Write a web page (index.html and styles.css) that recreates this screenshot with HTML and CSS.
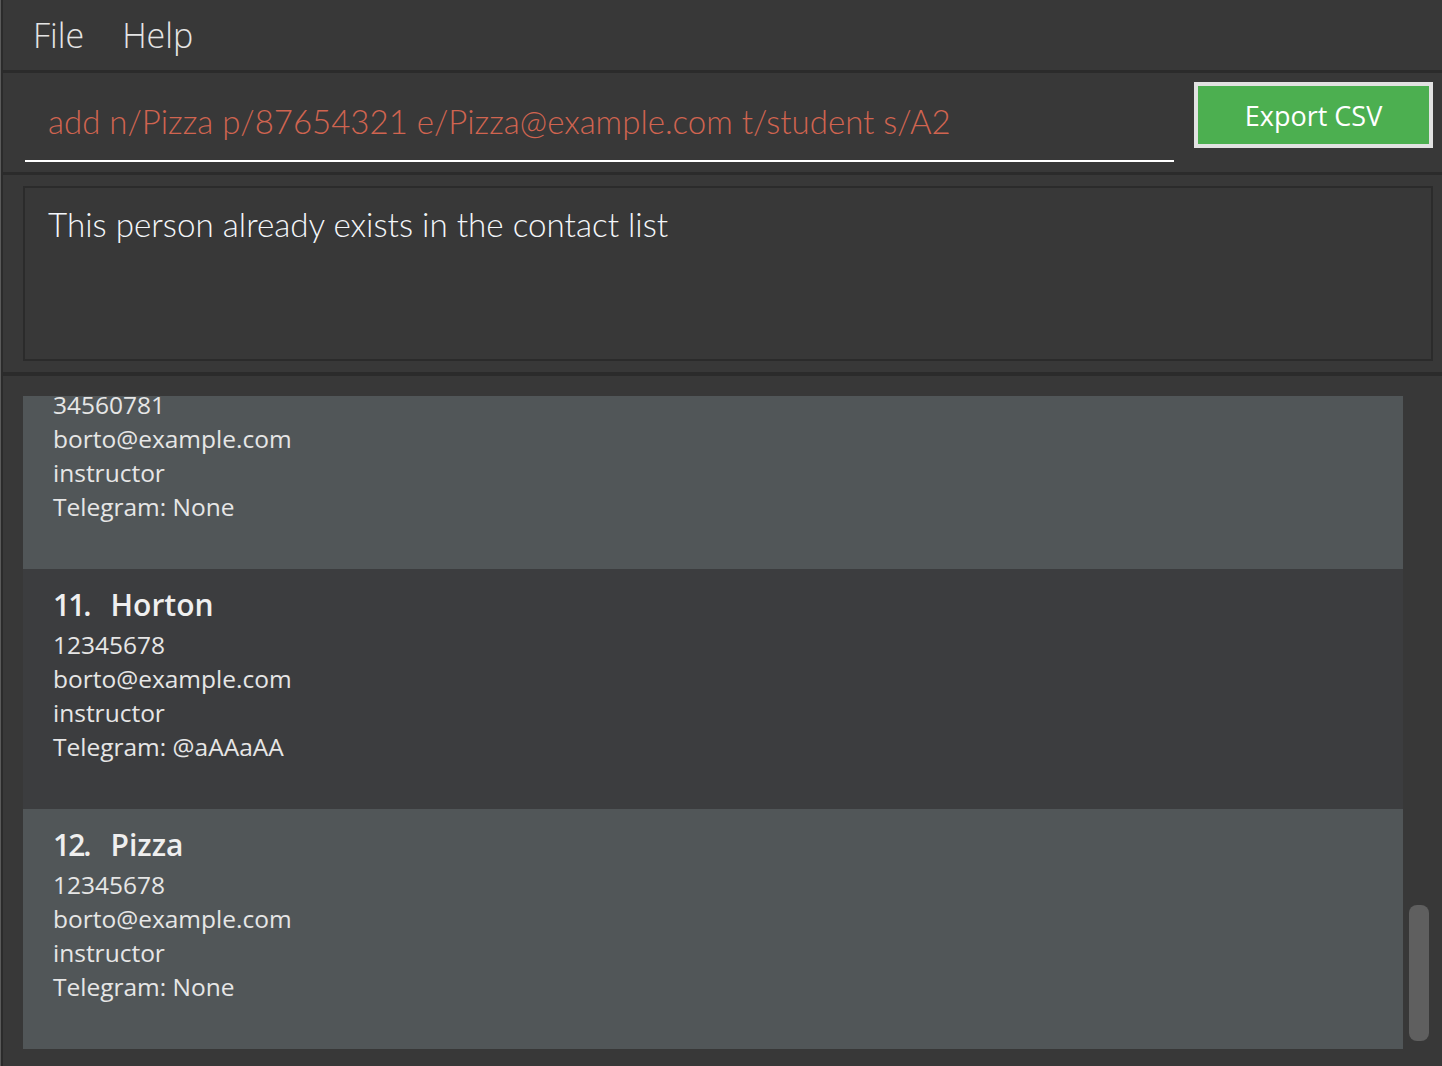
FILE: index.html
```html
<!DOCTYPE html>
<html lang="en">
<head>
<meta charset="utf-8">
<title>Contacts</title>
<link rel="stylesheet" href="styles.css">
</head>
<body>
<div class="app">
  <nav class="menubar">
    <span class="menu-item">File</span>
    <span class="menu-item">Help</span>
  </nav>
  <section class="command-pane">
    <div class="command-field">add n/Pizza p/87654321 e/Pizza@example.com t/student s/A2</div>
    <button class="export-btn">Export CSV</button>
  </section>
  <section class="result-pane">
    <div class="result-box">This person already exists in the contact list</div>
  </section>
  <section class="list-pane">
    <div class="list-viewport">
      <div class="card card-light card-first">
        <div class="card-line">34560781</div>
        <div class="card-line">borto@example.com</div>
        <div class="card-line">instructor</div>
        <div class="card-line">Telegram: None</div>
      </div>
      <div class="card card-dark">
        <div class="card-name"><span class="card-idx">11.</span><span>Horton</span></div>
        <div class="card-line">12345678</div>
        <div class="card-line">borto@example.com</div>
        <div class="card-line">instructor</div>
        <div class="card-line">Telegram: @aAAaAA</div>
      </div>
      <div class="card card-light">
        <div class="card-name"><span class="card-idx">12.</span><span>Pizza</span></div>
        <div class="card-line">12345678</div>
        <div class="card-line">borto@example.com</div>
        <div class="card-line">instructor</div>
        <div class="card-line">Telegram: None</div>
      </div>
    </div>
    <div class="scroll-track"><div class="scroll-thumb"></div></div>
  </section>
</div>
</body>
</html>
```
FILE: styles.css
```css
html, body {
  margin: 0;
  padding: 0;
  height: 100%;
  overflow: hidden;
}
body {
  background: #5a5a5a;
  padding-left: 1px;
  font-family: "Open Sans", "Noto Sans", sans-serif;
}
.app {
  height: 1066px;
  background: #383838;
  border-left: 2px solid #2b2b2b;
  display: flex;
  flex-direction: column;
}
.menubar {
  height: 73px;
  box-sizing: border-box;
  border-bottom: 3px solid #2b2b2b;
  display: flex;
  align-items: center;
  padding-left: 30px;
  gap: 38px;
  flex-shrink: 0;
}
.menu-item {
  color: #e4e4e4;
  font-weight: 300;
  font-size: 34px;
  line-height: 70px;
}
.command-pane {
  height: 102px;
  box-sizing: border-box;
  border-bottom: 3px solid #2b2b2b;
  display: flex;
  align-items: flex-start;
  padding: 9px 9px 0 22px;
  gap: 20px;
  flex-shrink: 0;
}
.command-field {
  flex: 1;
  height: 78px;
  border-bottom: 2px solid #ffffff;
  color: #d06450;
  font-family: "Lato", "Open Sans", sans-serif;
  font-weight: 300;
  font-size: 33px;
  line-height: 78px;
  padding-left: 23px;
  white-space: nowrap;
  overflow: hidden;
}
.export-btn {
  width: 239px;
  height: 66px;
  box-sizing: border-box;
  border: 4px solid #e2e2e2;
  background: #4caf50;
  color: #ffffff;
  font-family: "Open Sans", "Noto Sans", sans-serif;
  font-size: 27px;
  font-weight: 400;
  padding: 0;
}
.result-pane {
  height: 201px;
  box-sizing: border-box;
  border-bottom: 4px solid #2b2b2b;
  padding: 11px 9px 11px 20px;
  flex-shrink: 0;
}
.result-box {
  height: 175px;
  box-sizing: border-box;
  border: 2px solid #2b2b2b;
  padding: 10px 23px;
  color: #f4f6fa;
  font-family: "Lato", "Open Sans", sans-serif;
  font-weight: 300;
  font-size: 33.2px;
  line-height: 52px;
}
.list-pane {
  flex: 1;
  display: flex;
  padding: 20px 0 0 20px;
  gap: 6px;
  min-height: 0;
}
.list-viewport {
  width: 1380px;
  height: 653px;
  overflow: hidden;
}
.card {
  height: 240px;
  box-sizing: border-box;
  padding: 13px 30px 45px;
  color: #e6e6e6;
}
.card-first {
  height: 181px;
  margin-top: -8px;
  padding-top: 0;
}
.card-light {
  background: #515658;
}
.card-dark {
  background: #3c3d3f;
}
.card-name {
  display: flex;
  gap: 21px;
  font-size: 30px;
  font-weight: 600;
  line-height: 46px;
  color: #efefef;
}
.card-idx {
  letter-spacing: -2px;
}
.card-line {
  font-size: 24.5px;
  line-height: 34px;
}
.scroll-track {
  width: 20px;
  height: 653px;
}
.scroll-thumb {
  margin-top: 509px;
  height: 136px;
  border-radius: 8px;
  background: #5f5f5f;
}
```
